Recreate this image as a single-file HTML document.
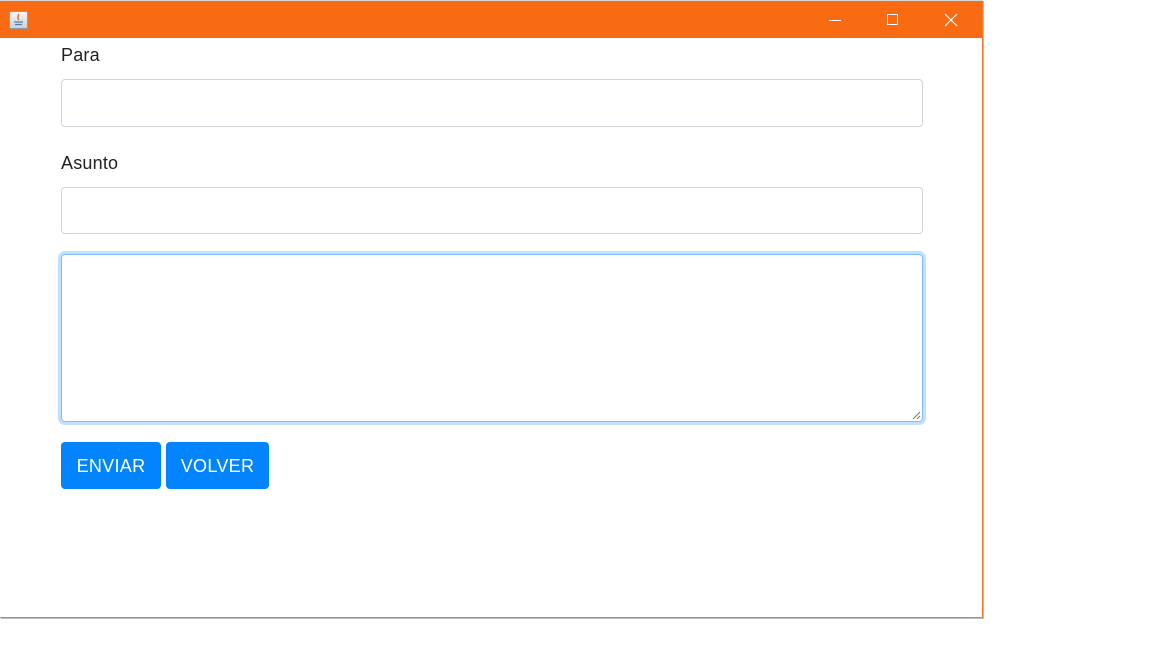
<!DOCTYPE html>
<html><head><meta charset="utf-8"><style>
html,body{margin:0;padding:0;width:1152px;height:648px;background:#fff;overflow:hidden;font-family:"Liberation Sans",sans-serif;}
.win{position:absolute;left:0;top:0;width:982px;height:617px;border-right:1px solid #f47a2a;border-bottom:1px solid #f47a2a;box-shadow:1px 1px 0 #bbb;background:#fff}
.title{position:absolute;left:0;top:1px;width:982px;height:37px;background:#f96b12}
.topline{position:absolute;left:0;top:0;width:983px;height:1px;background:#d9d9d9}
.ico{position:absolute;left:9px;top:10px;width:19px;height:18px;border:1px solid #8a9bb0;border-radius:2px;background:linear-gradient(#f4f6f9,#c9d2dd);box-sizing:border-box}
.lbl{position:absolute;left:61px;font-size:18px;color:#222;letter-spacing:0.2px}
.inp{position:absolute;left:61px;width:862px;border:1px solid #ced4da;border-radius:4px;box-sizing:border-box;background:#fff}
.ta{position:absolute;left:58px;top:251px;width:868px;height:174px;border:3px solid #c4e0fd;border-radius:7px;box-sizing:border-box}
.ta div{position:absolute;inset:0;border:1px solid #80bdff;border-radius:4px}
.btn{position:absolute;top:442px;height:47px;background:#0384ff;border-radius:4px;color:#fff;font-size:18px;line-height:48px;text-align:center;letter-spacing:0.3px}
</style></head><body>
<div class="win">
<div class="topline"></div>
<div class="title">
<div class="ico"><svg width="17" height="16" viewBox="0 0 17 16"><path d="M8 2c2 2-2 3 1 6" stroke="#e8731c" stroke-width="1.5" fill="none"/><path d="M4 10h9M5 12.5h7" stroke="#5a7aa0" stroke-width="1.2"/></svg></div>
<svg style="position:absolute;left:828px;top:12px" width="14" height="14"><path d="M1 7.5h12" stroke="#fff" stroke-width="1"/></svg>
<svg style="position:absolute;left:886px;top:12px" width="14" height="14"><rect x="1.5" y="1.5" width="10" height="10" stroke="#fff" fill="none"/></svg>
<svg style="position:absolute;left:944px;top:12px" width="14" height="14"><path d="M1 1l12 12M13 1L1 13" stroke="#fff" stroke-width="1.2"/></svg>
</div>
<div class="lbl" style="top:45px">Para</div>
<div class="inp" style="top:79px;height:48px"></div>
<div class="lbl" style="top:153px">Asunto</div>
<div class="inp" style="top:187px;height:47px"></div>
<div class="ta"><div></div>
<svg style="position:absolute;right:2px;bottom:2px" width="9" height="9"><path d="M8 1L1 8M8 5L5 8" stroke="#777"/></svg></div>
<div class="btn" style="left:61px;width:100px">ENVIAR</div>
<div class="btn" style="left:166px;width:103px">VOLVER</div>
</div>
</body></html>
